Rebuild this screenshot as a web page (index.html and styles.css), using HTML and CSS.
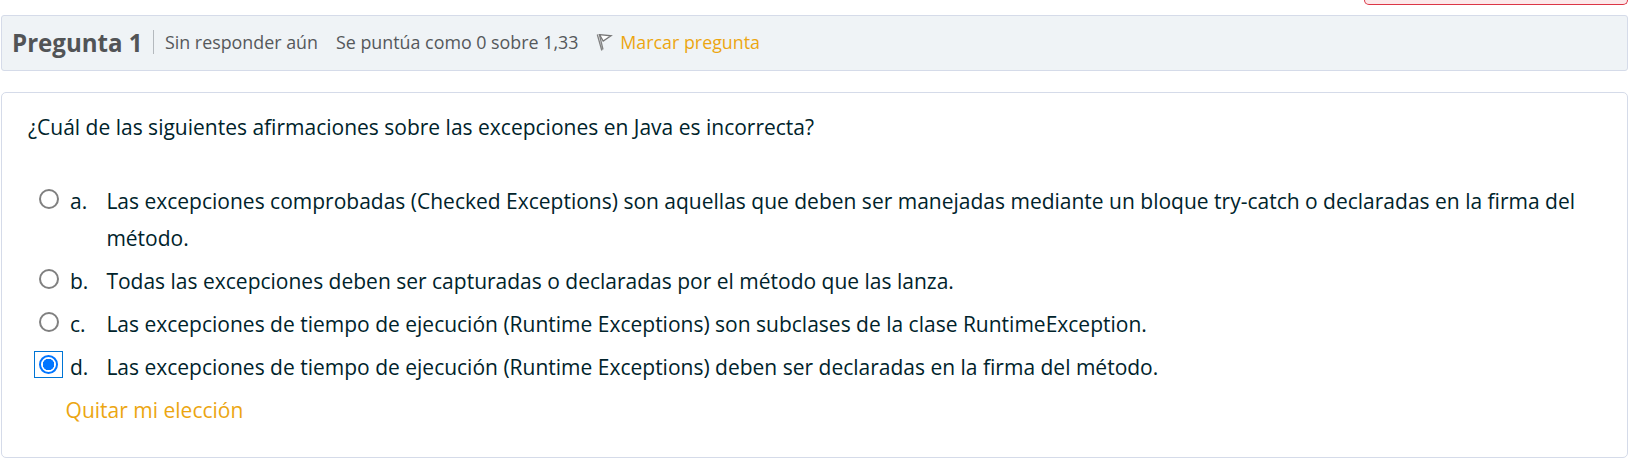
FILE: index.html
```html
<!DOCTYPE html>
<html lang="es">
<head>
<meta charset="utf-8">
<title>Pregunta 1</title>
<link rel="stylesheet" href="styles.css">
</head>
<body>
<div class="alert-edge"></div>
<header class="info">
  <h3 class="number">Pregunta 1</h3>
  <span class="state">Sin responder aún</span>
  <span class="grade">Se puntúa como 0 sobre 1,33</span>
  <a class="flag"><svg class="flag-icon" width="18" height="18" viewBox="0 0 18 18"><path d="M1.300 1.500L5.800 17.500M3.300 1.200L7 16.500" stroke="#828282" stroke-width="1.300" fill="none"/><path d="M3.600 1.700L15 2.800L7.200 8Z" stroke="#777" stroke-width="1.300" fill="#fff"/></svg><span>Marcar pregunta</span></a>
</header>
<main class="content">
  <p class="question">¿Cuál de las siguientes afirmaciones sobre las excepciones en Java es incorrecta?</p>
  <div class="answers">
    <label class="answer"><span class="box"><i class="radio"></i></span><span class="letter">a.</span><span class="text">Las excepciones comprobadas (Checked Exceptions) son aquellas que deben ser manejadas mediante un bloque try-catch o declaradas en la firma del método.</span></label>
    <label class="answer"><span class="box"><i class="radio"></i></span><span class="letter">b.</span><span class="text">Todas las excepciones deben ser capturadas o declaradas por el método que las lanza.</span></label>
    <label class="answer"><span class="box"><i class="radio"></i></span><span class="letter">c.</span><span class="text">Las excepciones de tiempo de ejecución (Runtime Exceptions) son subclases de la clase RuntimeException.</span></label>
    <label class="answer"><span class="box focused"><i class="radio checked"></i></span><span class="letter">d.</span><span class="text">Las excepciones de tiempo de ejecución (Runtime Exceptions) deben ser declaradas en la firma del método.</span></label>
  </div>
  <a class="clear">Quitar mi elección</a>
</main>
</body>
</html>
```
FILE: styles.css
```css
* { box-sizing: border-box; }
body { margin: 0; height: 474px; overflow: hidden; background: #fff; font-family: "Open Sans", sans-serif; color: #00232b; }
.alert-edge { width: 264px; height: 5px; margin-left: 1364px; border: 1px solid #dc3545; border-top: 0; border-radius: 0 0 5px 5px; background: #fce8ea; }
.info { display: flex; align-items: center; width: 1627px; height: 56px; margin: 10px 0 0 1px; padding: 0 0 2px 10px; background: #eff3f6; border: 1px solid #d5dbe9; border-radius: 3px; font-size: 17.850px; color: #55585b; white-space: nowrap; }
.number { margin: 0 10.500px 0 0; width: 130.500px; font-size: 24.100px; font-weight: 700; color: #525456; padding-top: 1px; }
.state { flex: none; width: 183px; padding-left: 11px; border-left: 1px solid #b4b9be; }
.grade { flex: none; width: 260.300px; }
.flag { display: flex; align-items: center; gap: 6px; color: #eca611; }
.content { width: 1627px; height: 366px; margin: 21px 0 0 1px; padding: 16px 26px; border: 1px solid #d5dbe9; border-radius: 5px; font-size: 21px; line-height: 37px; }
.question { margin: 0 0 37px; }
.answer { display: flex; align-items: flex-start; margin-bottom: 6px; white-space: nowrap; }
.box { display: flex; flex: none; align-items: center; justify-content: center; width: 29px; height: 27px; margin: 2px 7px 0 6px; }
.focused { border: 1px solid #0075d5; }
.radio { flex: none; width: 20px; height: 20px; border: 2px solid #808080; border-radius: 50%; background: #fff; }
.checked { width: 19px; height: 19px; border-color: #0075ff; background: radial-gradient(circle, #0075ff 0 5.500px, #fff 6px); }
.letter { width: 36.400px; }
.text { width: 1480px; white-space: normal; }
.clear { margin-left: 37.600px; color: #eca611; }
```
